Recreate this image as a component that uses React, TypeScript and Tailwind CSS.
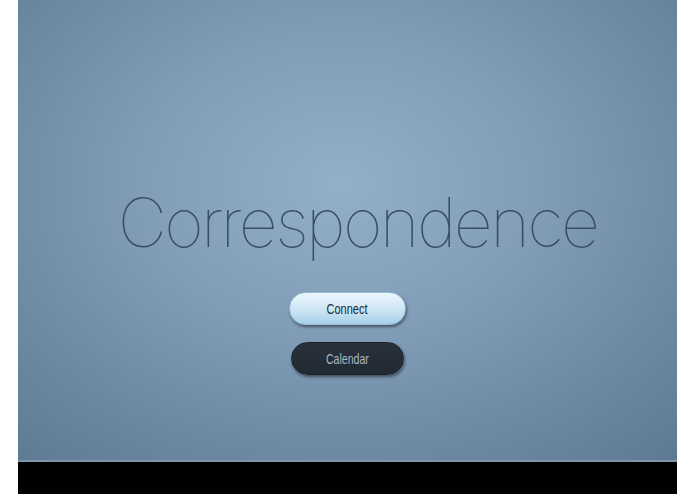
import React from "react";

export default function App() {
  return (
    <div className="w-[695px] h-[494px] bg-white flex">
      <div className="ml-[18px] w-[659px] h-[494px] flex flex-col">
        <div className="h-[462px] flex flex-col items-center bg-[radial-gradient(ellipse_75%_80%_at_49%_40%,#93b0ca_0%,#819db8_40%,#6c88a3_75%,#5f7a95_100%)] border-b-2 border-[#7c95ab]">
          <div
            className="mt-[188px] pl-[20px] text-[#3a4e62] text-[68px] leading-none font-thin tracking-[-2.6px]"
            style={{ fontFamily: "Inter, 'Noto Sans', sans-serif" }}
          >
            Correspondence
          </div>
          <button
            className="mt-[36px] w-[117px] h-[33px] pt-[2px] rounded-full bg-[linear-gradient(to_bottom,#ecf6fc,#cfe7f5_50%,#a7d1ea)] shadow-[1px_2px_3px_rgba(0,0,0,0.45)] border border-[#98bcd3] flex items-center justify-center"
          >
            <span
              className="inline-block text-[14.5px] text-[#1b2733] scale-x-[0.76]"
              style={{ fontFamily: "'Liberation Sans', Arial, sans-serif" }}
            >
              Connect
            </span>
          </button>
          <button
            className="mt-[17px] w-[113px] h-[33px] pt-[2px] rounded-full bg-[linear-gradient(to_bottom,#29323c,#212932)] shadow-[1px_2px_3px_rgba(0,0,0,0.45)] border border-[#1a2028] flex items-center justify-center"
          >
            <span
              className="inline-block text-[14.5px] text-[#a9b6c2] scale-x-[0.73]"
              style={{ fontFamily: "'Liberation Sans', Arial, sans-serif" }}
            >
              Calendar
            </span>
          </button>
        </div>
        <div className="flex-1 bg-black" />
      </div>
    </div>
  );
}
